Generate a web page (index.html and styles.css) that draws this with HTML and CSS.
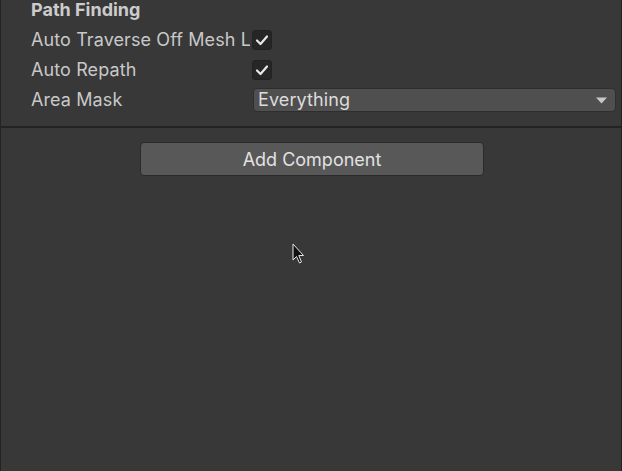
FILE: index.html
```html
<!DOCTYPE html>
<html>
<head>
<meta charset="utf-8">
<link rel="stylesheet" href="styles.css">
</head>
<body>
<div class="panel">
  <div class="section">
    <div class="header">Path Finding</div>
    <div class="row">
      <div class="label">Auto Traverse Off Mesh Link</div>
      <div class="checkbox"><svg width="20" height="20" viewBox="0 0 20 20"><polyline points="5,10.5 8.5,14 15,6.5" fill="none" stroke="#e8e8e8" stroke-width="2.2" stroke-linecap="round" stroke-linejoin="round"/></svg></div>
    </div>
    <div class="row">
      <div class="label">Auto Repath</div>
      <div class="checkbox"><svg width="20" height="20" viewBox="0 0 20 20"><polyline points="5,10.5 8.5,14 15,6.5" fill="none" stroke="#e8e8e8" stroke-width="2.2" stroke-linecap="round" stroke-linejoin="round"/></svg></div>
    </div>
    <div class="row row-dropdown">
      <div class="label">Area Mask</div>
      <div class="dropdown">
        <span class="dropdown-text">Everything</span>
        <svg class="arrow" width="11" height="7" viewBox="0 0 11 7"><polygon points="0,0.5 11,0.5 5.5,6.5" fill="#c8c8c8"/></svg>
      </div>
    </div>
  </div>
  <div class="separator"></div>
  <div class="actions">
    <button class="add-btn">Add Component</button>
  </div>
  <svg class="cursor" width="14" height="22" viewBox="0 0 14 22"><path d="M1 1 L1 17 L4.5 13.5 L7.5 20 L9.5 19 L6.8 12.5 L11.5 12.5 Z" fill="#111" stroke="#e6e6e6" stroke-width="1"/></svg>
</div>
</body>
</html>
```
FILE: styles.css
```css
html, body {
  margin: 0;
  padding: 0;
  background: #383838;
}
body {
  font-family: Inter, "Noto Sans", sans-serif;
  font-size: 18px;
  color: #c8c8c8;
}
.panel {
  position: relative;
  height: 471px;
  box-sizing: border-box;
  border-left: 1px solid #232323;
  border-right: 1px solid #232323;
  overflow: hidden;
}
.section {
  padding: 0 5px 14px 30px;
  display: flex;
  flex-direction: column;
  gap: 10px;
}
.header {
  font-weight: 700;
  line-height: 20px;
  height: 20px;
  color: #cccccc;
}
.row {
  display: flex;
  align-items: center;
  height: 20px;
  line-height: 20px;
  letter-spacing: 0.1px;
}
.row-dropdown {
  height: 24px;
  line-height: 24px;
  margin-top: -2px;
}
.label {
  width: 219px;
  margin-right: 2px;
  flex: none;
  white-space: nowrap;
  overflow: hidden;
}
.checkbox {
  width: 20px;
  height: 20px;
  border-radius: 3px;
  background: #262626;
  box-sizing: border-box;
  border: 1px solid #222;
}
.checkbox svg {
  display: block;
  margin: -1px;
}
.dropdown {
  flex: 1;
  margin-left: 1px;
  height: 24px;
  box-sizing: border-box;
  border: 1px solid #2e2e2e;
  border-radius: 4px;
  background: #4f4f4f;
  display: flex;
  align-items: center;
  justify-content: space-between;
  padding: 0 8px 0 4px;
  color: #dcdcdc;
}
.arrow {
  display: block;
}
.separator {
  height: 2px;
  background: #232323;
}
.actions {
  display: flex;
  justify-content: center;
  padding-top: 14px;
}
.add-btn {
  width: 344px;
  height: 34px;
  margin-left: 2px;
  box-sizing: border-box;
  border: 1px solid #2a2a2a;
  border-radius: 4px;
  background: #585858;
  color: #e2e2e2;
  font-family: Inter, "Noto Sans", sans-serif;
  font-size: 18px;
  padding: 0;
}
.cursor {
  position: absolute;
  left: 291px;
  top: 243px;
}
```
